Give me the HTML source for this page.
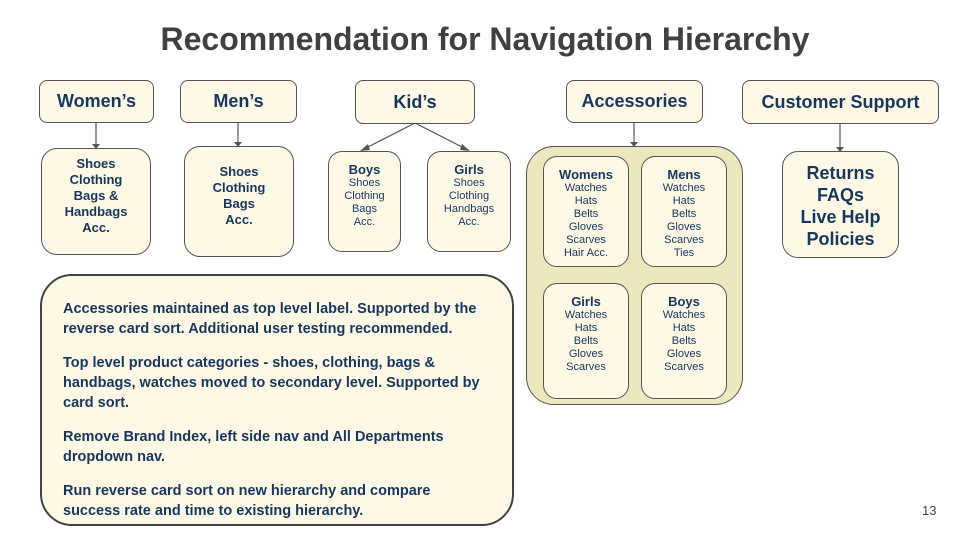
<!DOCTYPE html>
<html><head><meta charset="utf-8"><style>
*{margin:0;padding:0;box-sizing:border-box}
body{width:960px;height:540px;background:#fff;position:relative;overflow:hidden;font-family:"Liberation Sans",Arial,sans-serif;color:#17375e}
.b{position:absolute;background:#fef9e7;border:1px solid #555;text-align:center}
.h{border-radius:8px;font-weight:bold;font-size:18px;display:flex;align-items:center;justify-content:center}
.c{border-radius:16px;font-weight:bold;font-size:13px;line-height:16px}
.s{border-radius:14px;font-size:11px;line-height:13px;padding-top:10px}
.s b{font-size:13px;display:block;line-height:15px}
#title{position:absolute;left:0;width:970px;top:21px;text-align:center;font-size:32px;font-weight:bold;color:#404040}
#txt{position:absolute;left:40px;top:274px;width:474px;height:252px;border:2.5px solid #444;border-radius:32px;background:#fef9e7;padding:23px 0 0 21px;font-weight:bold;font-size:14.5px;line-height:20px;white-space:nowrap}
#txt p{margin-bottom:14px}
</style></head><body>
<div id="title">Recommendation for Navigation Hierarchy</div>
<svg width="960" height="540" style="position:absolute;left:0;top:0">
<g stroke="#555" stroke-width="1.2" fill="#555">
<line x1="96" y1="122" x2="96" y2="145"/><polygon points="92,144 100,144 96,149" stroke="none"/>
<line x1="238" y1="122" x2="238" y2="143"/><polygon points="234,142 242,142 238,147" stroke="none"/>
<line x1="415" y1="123" x2="366" y2="148"/><polygon points="360,151 368,144 370,150" stroke="none"/>
<line x1="415" y1="123" x2="464" y2="148"/><polygon points="470,151 462,144 460,150" stroke="none"/>
<line x1="634" y1="122" x2="634" y2="143"/><polygon points="630,142 638,142 634,147" stroke="none"/>
<line x1="840" y1="123" x2="840" y2="148"/><polygon points="836,147 844,147 840,152" stroke="none"/>
</g></svg>
<div class="b h" style="left:39px;top:80px;width:115px;height:43px">Women’s</div>
<div class="b h" style="left:180px;top:80px;width:117px;height:43px">Men’s</div>
<div class="b h" style="left:355px;top:80px;width:120px;height:44px">Kid’s</div>
<div class="b h" style="left:566px;top:80px;width:137px;height:43px">Accessories</div>
<div class="b h" style="left:742px;top:80px;width:197px;height:44px">Customer Support</div>

<div class="b c" style="left:41px;top:148px;width:110px;height:107px;padding-top:7px">Shoes<br>Clothing<br>Bags &amp;<br>Handbags<br>Acc.</div>
<div class="b c" style="left:184px;top:146px;width:110px;height:111px;padding-top:17px">Shoes<br>Clothing<br>Bags<br>Acc.</div>
<div class="b s" style="left:328px;top:151px;width:73px;height:101px">
<b>Boys</b>Shoes<br>Clothing<br>Bags<br>Acc.</div>
<div class="b s" style="left:427px;top:151px;width:84px;height:101px">
<b>Girls</b>Shoes<br>Clothing<br>Handbags<br>Acc.</div>

<div style="position:absolute;left:526px;top:146px;width:217px;height:259px;background:#ede7bd;border:1px solid #555;border-radius:28px"></div>
<div class="b s" style="left:543px;top:156px;width:86px;height:111px"><b>Womens</b>Watches<br>Hats<br>Belts<br>Gloves<br>Scarves<br>Hair Acc.</div>
<div class="b s" style="left:641px;top:156px;width:86px;height:111px"><b>Mens</b>Watches<br>Hats<br>Belts<br>Gloves<br>Scarves<br>Ties</div>
<div class="b s" style="left:543px;top:283px;width:86px;height:116px"><b>Girls</b>Watches<br>Hats<br>Belts<br>Gloves<br>Scarves</div>
<div class="b s" style="left:641px;top:283px;width:86px;height:116px"><b>Boys</b>Watches<br>Hats<br>Belts<br>Gloves<br>Scarves</div>

<div class="b" style="left:782px;top:151px;width:117px;height:107px;border-radius:16px;font-weight:bold;font-size:18px;line-height:22px;padding-top:10px">Returns<br>FAQs<br>Live Help<br>Policies</div>

<div id="txt">
<p>Accessories maintained as top level label. Supported by the<br>reverse card sort. Additional user testing recommended.</p>
<p>Top level product categories - shoes, clothing, bags &amp;<br>handbags, watches moved to secondary level. Supported by<br>card sort.</p>
<p>Remove Brand Index, left side nav and All Departments<br>dropdown nav.</p>
<p>Run reverse card sort on new hierarchy and compare<br>success rate and time to existing hierarchy.</p>
</div>
<div style="position:absolute;left:922px;top:503px;font-size:13px;color:#444">13</div>
</body></html>
